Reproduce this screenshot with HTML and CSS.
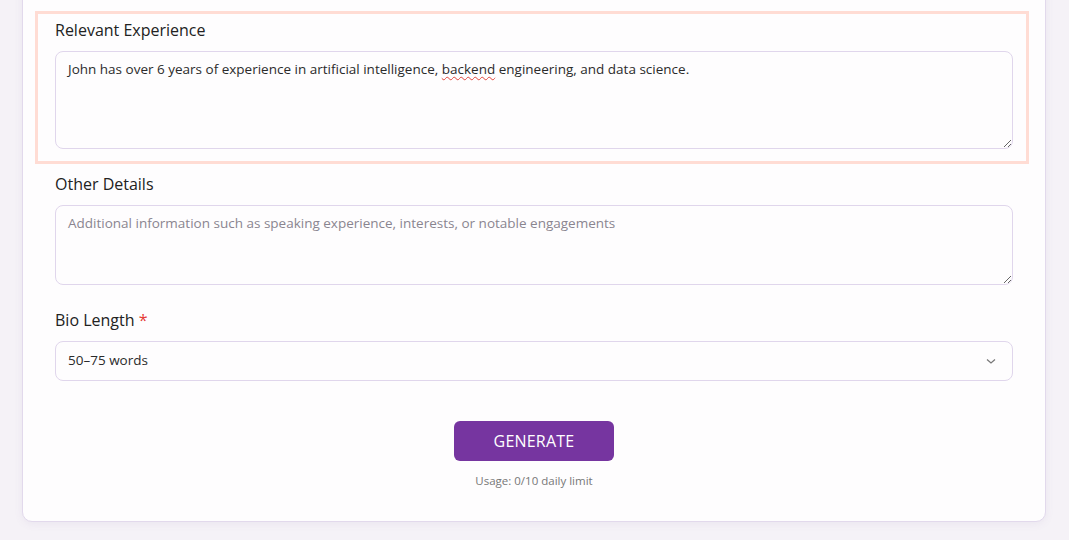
FILE: index.html
```html
<!DOCTYPE html>
<html lang="en">
  <head>
    <meta charset="UTF-8" />
    <meta name="viewport" content="width=device-width, initial-scale=1.0" />
    <title>Speaker Bio Generator</title>
    <link rel="stylesheet" href="styles.css">
  </head>

  <body>
    <div class="page">
      <form class="card">
        <div class="field">
          <span class="highlight"></span>
          <label class="label">Relevant Experience</label>
          <div class="textarea tall">John has over 6 years of experience in artificial intelligence, <span class="misspelt">backend</span> engineering, and data science.</div>
        </div>

        <div class="field">
          <label class="label">Other Details</label>
          <textarea class="textarea" placeholder="Additional information such as speaking experience, interests, or notable engagements"></textarea>
        </div>

        <div class="field">
          <label class="label">Bio Length <span class="req">*</span></label>
          <div class="select">
            <span>50–75 words</span>
            <svg width="12" height="12" viewBox="0 0 12 12">
              <path d="M2 4.5 L6 8 L10 4.5" fill="none" stroke="#777" stroke-width="1.2" />
            </svg>
          </div>
        </div>

        <div class="actions">
          <button type="button" class="btn">GENERATE</button>
          <p class="usage">Usage: 0/10 daily limit</p>
        </div>
      </form>
    </div>
  </body>
</html>
```

FILE: styles.css
```css
* {
  box-sizing: border-box;
}

body {
  margin: 0;
  background: #f5f2f7;
  font-family: "Open Sans", "Noto Sans", sans-serif;
  color: #2b2b2b;
}

.page {
  padding: 0 0 19px 22px;
}

.card {
  width: 1024px;
  margin-top: -20px;
  padding: 37px 32px 33px;
  background: #fefdfe;
  border: 1px solid #e2d9ec;
  border-radius: 0 0 10px 10px;
  box-shadow: 0 2px 8px rgba(120, 90, 150, 0.08);
}

.field {
  position: relative;
  margin-bottom: 23px;
}

.highlight {
  position: absolute;
  top: -7px;
  left: -20px;
  right: -16px;
  bottom: -15px;
  border: 3px solid #ffdcd4;
  pointer-events: none;
}

.label {
  display: block;
  font-size: 16px;
  line-height: 24px;
  font-weight: 500;
  margin-bottom: 9px;
  color: #222;
}

.req {
  color: #e53935;
}

.textarea {
  display: block;
  width: 100%;
  height: 80px;
  padding: 7px 12px;
  border: 1px solid #e0d6ec;
  border-radius: 8px;
  background: #fefdfe;
  font-family: inherit;
  font-size: 13.5px;
  line-height: 20px;
  color: #2b2b2b;
  resize: vertical;
  overflow: auto;
}

.textarea.tall {
  height: 98px;
}

.textarea::placeholder {
  color: #8a8590;
}

.misspelt {
  text-decoration: underline wavy #e0443a;
  text-decoration-thickness: 1.2px;
  text-underline-offset: 2px;
}

.select {
  display: flex;
  align-items: center;
  justify-content: space-between;
  height: 40px;
  padding: 0 15px 3px 12px;
  border: 1px solid #e0d6ec;
  border-radius: 8px;
  font-size: 13.5px;
}

.select svg {
  margin-top: 3px;
}

.actions {
  display: flex;
  flex-direction: column;
  align-items: center;
  padding-top: 17px;
}

.btn {
  width: 160px;
  height: 40px;
  border: none;
  border-radius: 6px;
  background: #7635a0;
  color: #fff;
  font-family: inherit;
  font-size: 16px;
  letter-spacing: 0.2px;
}

.usage {
  margin: 12px 0 0;
  font-size: 11.5px;
  color: #777;
}
```
